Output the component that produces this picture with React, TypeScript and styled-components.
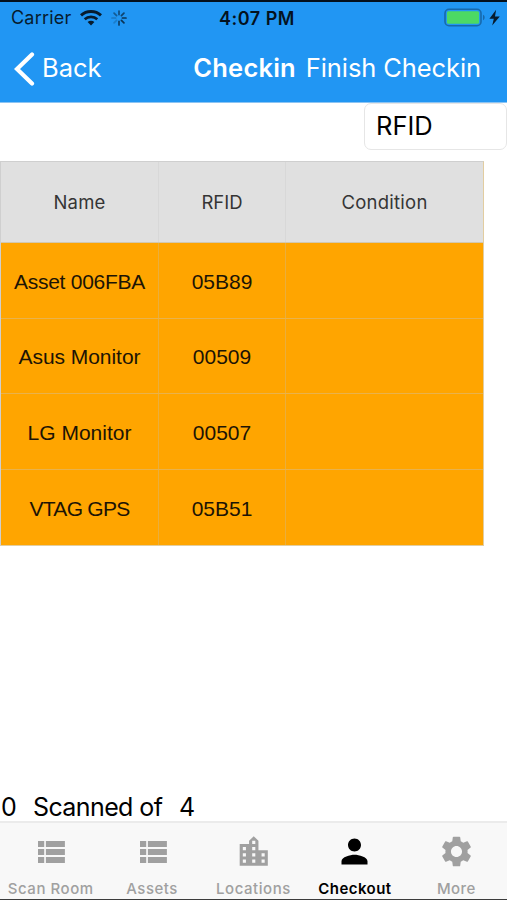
import React from "react";
import styled, { createGlobalStyle } from "styled-components";
import { MdLocationCity, MdPerson, MdSettings } from "react-icons/md";

const GlobalStyle = createGlobalStyle`
  *, *::before, *::after { box-sizing: border-box; }
  body { margin: 0; background: #fff; }
`;

const Screen = styled.div`
  width: 507px;
  height: 900px;
  display: flex;
  flex-direction: column;
  overflow: hidden;
  background: #fff;
  color: #000;
  font-family: Inter, "Liberation Sans", sans-serif;
  border-top: 2px solid #04101c;
  border-bottom: 1px solid #3c3c3c;
`;

const Header = styled.header`
  flex: none;
  height: 101px;
  background: #2196f3;
  border-bottom: 1px solid #8cc4f3;
`;

const StatusBar = styled.div`
  height: 32px;
  display: grid;
  grid-template-columns: 1fr auto 1fr;
  align-items: center;
  padding: 0 7px 0 11px;
  color: #071c2e;
`;

const StatusGroup = styled.div<{ $end?: boolean }>`
  display: flex;
  align-items: center;
  justify-content: ${(p) => (p.$end ? "flex-end" : "flex-start")};
`;

const Label = styled.span<{ $size: number; $weight?: number; $spacing?: number }>`
  font-size: ${(p) => p.$size}px;
  font-weight: ${(p) => p.$weight ?? 400};
  letter-spacing: ${(p) => p.$spacing ?? 0}px;
  line-height: 1.2;
  white-space: pre;
`;

const Clock = styled.div`
  display: flex;
  padding: 2px 0 0 3px;
  color: #04121f;
`;

const WifiIcon = styled.svg`
  margin-left: 9px;
`;

const SpinnerIcon = styled.svg`
  margin-left: 9px;
`;

const NavBar = styled.nav`
  height: 69px;
  display: flex;
  align-items: center;
  padding: 0 26px 0 14px;
  color: #fff;
`;

const BackButton = styled.button`
  display: flex;
  align-items: center;
  gap: 7px;
  padding: 0;
  margin-right: auto;
  border: 0;
  background: none;
  color: inherit;
  font-family: inherit;
`;

const Title = styled.h1`
  display: flex;
  margin: 0 10px 0 0;
`;

const FinishButton = styled.button`
  display: flex;
  padding: 0;
  border: 0;
  background: none;
  color: inherit;
  font-family: inherit;
`;

const Content = styled.main`
  flex: 1;
  display: flex;
  flex-direction: column;
`;

const RfidField = styled.div`
  align-self: flex-end;
  width: 143px;
  height: 47px;
  padding: 7px 0 0 11px;
  border: 1px solid #e6e6e6;
  border-radius: 7px;
`;

const Table = styled.div`
  width: 484px;
  margin-top: 11px;
  border: 1px solid #cfcfcf;
  border-bottom-color: #e2cda0;
  border-right-color: #e2cda0;
`;

const Row = styled.div<{ $head?: boolean }>`
  display: grid;
  grid-template-columns: 158px 127px 1fr;
  height: ${(p) => (p.$head ? "81px" : "75.6px")};
  background: ${(p) => (p.$head ? "#e0e0e0" : "#ffa500")};
  color: ${(p) => (p.$head ? "#353535" : "#1c1405")};
  font-family: ${(p) => (p.$head ? "inherit" : '"Liberation Sans", sans-serif')};
  border-bottom: 1px solid ${(p) => (p.$head ? "#d3c8ae" : "#e9b24c")};

  &:last-child { border-bottom: 0; }
`;

const Cell = styled.div<{ $head?: boolean }>`
  display: flex;
  align-items: center;
  justify-content: center;
  padding-top: ${(p) => (p.$head ? 1 : 2)}px;
  border-right: 1px solid ${(p) => (p.$head ? "#d8d8d8" : "#eaae3c")};

  &:last-child { border-right: 0; }
`;

const Summary = styled.div`
  display: flex;
  align-items: center;
  height: 29px;
  margin-top: auto;
  padding-left: 1px;
`;

const Count = styled.span<{ $start: number }>`
  width: ${(p) => p.$start}px;
  flex: none;
`;

const TabBar = styled.nav`
  flex: none;
  display: grid;
  grid-template-columns: repeat(5, 1fr);
  height: 78px;
  background: #f8f8f8;
  border-top: 2px solid #ebebeb;
`;

const Tab = styled.button<{ $active?: boolean }>`
  display: flex;
  flex-direction: column;
  align-items: center;
  padding: 10px 0 0;
  border: 0;
  background: none;
  color: ${(p) => (p.$active ? "#000" : "#a0a0a0")};
  font-family: inherit;
`;

const TabIcon = styled.div<{ $shift: number; $size: number }>`
  display: flex;
  align-items: center;
  height: 37px;
  margin-bottom: 10px;
  padding-left: ${(p) => p.$shift * 2}px;

  svg { width: ${(p) => p.$size}px; height: ${(p) => p.$size}px; }
`;

const ListIcon = () => (
  <svg viewBox="0 0 37 37" fill="currentColor">
    {[8, 16, 24].map((y) => (
      <path key={y} d={`M5 ${y}h6.2v6H5zM12.9 ${y}h19v6h-19z`} />
    ))}
  </svg>
);

const assets = [
  { name: "Asset 006FBA", rfid: "05B89", spacing: -0.25 },
  { name: "Asus Monitor", rfid: "00509", spacing: -0.05 },
  { name: "LG Monitor", rfid: "00507", spacing: 0 },
  { name: "VTAG GPS", rfid: "05B51", spacing: -0.75 },
];

const tabs = [
  { label: "Scan Room", Icon: ListIcon, spacing: 0.55, shift: 1, size: 37 },
  { label: "Assets", Icon: ListIcon, spacing: 0.5, shift: 1, size: 37 },
  { label: "Locations", Icon: MdLocationCity, spacing: 0.55, shift: 0.5, size: 37.5 },
  { label: "Checkout", Icon: MdPerson, spacing: 0.45, shift: 0, size: 39, active: true },
  { label: "More", Icon: MdSettings, spacing: 0.4, shift: 0, size: 37 },
];

const Wifi = () => (
  <WifiIcon width="22" height="16" viewBox="0 0 22 16" fill="none" stroke="currentColor">
    <path d="M1 5.4C6.5.2 15.5.2 21 5.4" strokeWidth="3" />
    <path d="M4.7 9.2C8.2 6 13.8 6 17.3 9.2" strokeWidth="2.7" />
    <path d="M7.6 12.1C9.5 10.4 12.5 10.4 14.4 12.1L11 15.5Z" fill="currentColor" stroke="none" />
  </WifiIcon>
);

const spokes = [0.75, 0.85, 1, 1, 0.9, 0.25, 0.3, 0.6];

const Spinner = () => (
  <SpinnerIcon width="16" height="16" viewBox="0 0 16 16" stroke="currentColor" strokeWidth="1.7" strokeLinecap="round">
    {spokes.map((opacity, i) => (
      <path key={i} d="M8 1V4.6" opacity={opacity * 0.8} transform={`rotate(${i * 45} 8 8)`} />
    ))}
  </SpinnerIcon>
);

const Battery = () => (
  <svg width="56" height="20" viewBox="0 0 56 20">
    <rect x="1" y="1.3" width="36" height="16.4" rx="4" fill="none" stroke="#1769ac" strokeWidth="1.6" />
    <rect x="2.9" y="3.2" width="32.2" height="12.6" rx="1.6" fill="#4cd964" />
    <path d="M39 6.8C41.2 7.6 41.2 11.4 39 12.2Z" fill="#1769ac" />
    <path d="M52.1 1.8L45.4 10.8H49.8L48.2 17.6L55.8 8.5H51Z" fill="#071c2e" />
  </svg>
);

export default function App() {
  return (
    <Screen>
      <GlobalStyle />
      <Header>
        <StatusBar>
          <StatusGroup>
            <Label $size={18} $spacing={0.2}>Carrier</Label>
            <Wifi />
            <Spinner />
          </StatusGroup>
          <Clock><Label $size={18} $weight={600} $spacing={0.5}>4:07 PM</Label></Clock>
          <StatusGroup $end>
            <Battery />
          </StatusGroup>
        </StatusBar>
        <NavBar>
          <BackButton>
            <svg width="21" height="34" viewBox="0 0 21 34" fill="none" stroke="currentColor" strokeWidth="4.2" strokeLinecap="round">
              <path d="M18 2.5L3 17L18 31.5" />
            </svg>
            <Label $size={25.5}>Back</Label>
          </BackButton>
          <Title><Label $size={25.5} $weight={600} $spacing={0.2}>Checkin</Label></Title>
          <FinishButton><Label $size={25.5} $spacing={-0.1}>Finish Checkin</Label></FinishButton>
        </NavBar>
      </Header>
      <Content>
        <RfidField><Label $size={25.5}>RFID</Label></RfidField>
        <Table>
          <Row $head>
            <Cell $head><Label $size={18.5} $spacing={0.2}>Name</Label></Cell>
            <Cell $head><Label $size={18.5}>RFID</Label></Cell>
            <Cell $head><Label $size={18.5} $spacing={0.25}>Condition</Label></Cell>
          </Row>
          {assets.map((asset) => (
            <Row key={asset.name}>
              <Cell><Label $size={21} $spacing={asset.spacing}>{asset.name}</Label></Cell>
              <Cell><Label $size={21}>{asset.rfid}</Label></Cell>
              <Cell />
            </Row>
          ))}
        </Table>
        <Summary>
          <Count $start={32}><Label $size={25} $spacing={-0.5}>0</Label></Count>
          <Count $start={146}><Label $size={25} $spacing={-0.6}>Scanned of</Label></Count>
          <Label $size={25}>4</Label>
        </Summary>
      </Content>
      <TabBar>
        {tabs.map(({ label, Icon, spacing, shift, size, active }) => (
          <Tab key={label} $active={active}>
            <TabIcon $shift={shift} $size={size}><Icon /></TabIcon>
            <Label $size={15} $weight={active ? 600 : 500} $spacing={spacing}>{label}</Label>
          </Tab>
        ))}
      </TabBar>
    </Screen>
  );
}
